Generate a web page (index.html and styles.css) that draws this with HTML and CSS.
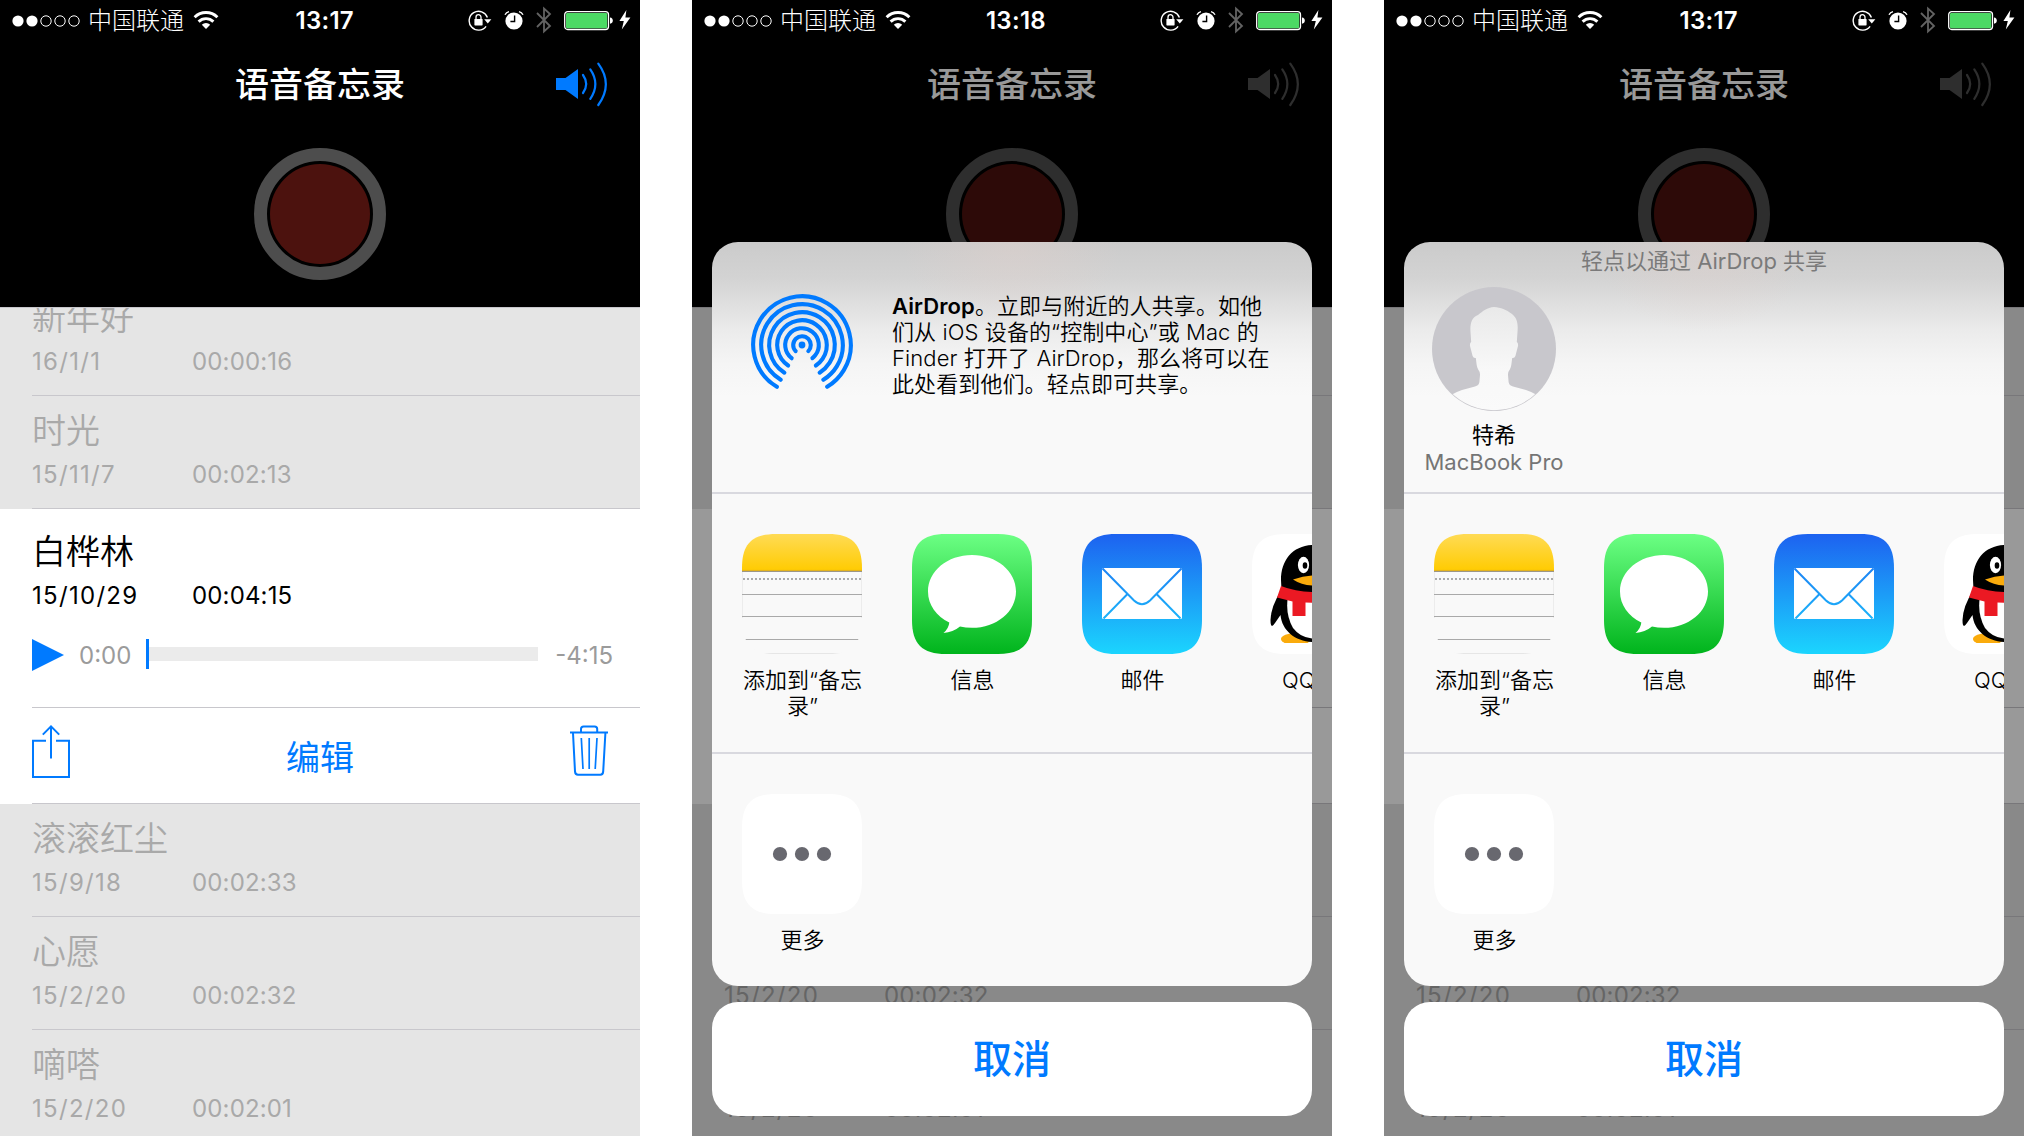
FILE: index.html
```html
<!DOCTYPE html>
<html lang="zh-CN">
<head>
<meta charset="utf-8">
<title>语音备忘录</title>
<link rel="stylesheet" href="styles.css">
</head>
<body>
<svg class="defs" width="0" height="0" aria-hidden="true">
  <defs>
    <linearGradient id="g-notes" x1="0" y1="0" x2="0" y2="1"><stop offset="0" stop-color="#ffdb55"/><stop offset="1" stop-color="#ffcb00"/></linearGradient>
    <linearGradient id="g-msg" x1="0" y1="0" x2="0" y2="1"><stop offset="0" stop-color="#6cff84"/><stop offset="1" stop-color="#00b41c"/></linearGradient>
    <linearGradient id="g-mail" x1="0" y1="0" x2="0" y2="1"><stop offset="0" stop-color="#1d62f0"/><stop offset="1" stop-color="#1bd5fe"/></linearGradient>
    <linearGradient id="g-mail-line" gradientUnits="userSpaceOnUse" x1="0" y1="0" x2="0" y2="120"><stop offset="0" stop-color="#1d62f0"/><stop offset="1" stop-color="#1bd5fe"/></linearGradient>
    <linearGradient id="g-head" x1="0" y1="0" x2="0" y2="1"><stop offset="0" stop-color="#e9e9e9"/><stop offset=".6" stop-color="#f8f8f8"/><stop offset="1" stop-color="#fafafa"/></linearGradient>
    <path id="squircle" d="M34 0H86C110 0 120 10 120 34V86C120 110 110 120 86 120H34C10 120 0 110 0 86V34C0 10 10 0 34 0Z"/>
    <clipPath id="c-app"><use href="#squircle"/></clipPath>
    <clipPath id="c-avatar"><circle cx="62" cy="62" r="61.2"/></clipPath>
  </defs>
  <symbol id="i-signal" viewBox="0 0 70 14">
    <circle cx="7" cy="7" r="5.6" fill="#fff"/><circle cx="21" cy="7" r="5.6" fill="#fff"/>
    <g fill="none" stroke="#fff" stroke-width="1"><circle cx="35" cy="7" r="5.2"/><circle cx="49" cy="7" r="5.2"/><circle cx="63" cy="7" r="5.2"/></g>
  </symbol>
  <symbol id="i-wifi" viewBox="0 0 26 20">
    <g fill="none" stroke="#fff" stroke-width="2.9"><path d="M1.6 7.2A16.3 16.3 0 0 1 24.4 7.2"/><path d="M5.6 11.6A10.6 10.6 0 0 1 20.4 11.6"/></g>
    <path d="M8.8 14.8A6 6 0 0 1 17.2 14.8L13 19Z" fill="#fff"/>
  </symbol>
  <symbol id="i-lock" viewBox="0 0 24 24">
    <path d="M18.1 18.4A9.4 9.4 0 1 1 19.4 9.5" fill="none" stroke="#fff" stroke-width="1.4"/>
    <path d="M16.2 11.2H23.4L19.8 15.6Z" fill="#fff"/>
    <rect x="6.4" y="11" width="8.2" height="6.4" rx=".6" fill="#fff"/>
    <path d="M8 11.4V9.2a2.5 2.5 0 0 1 5 0v2.2" fill="none" stroke="#fff" stroke-width="1.3"/>
  </symbol>
  <symbol id="i-alarm" viewBox="0 0 20 20">
    <circle cx="10" cy="11" r="8.6" fill="#fff"/>
    <path d="M1 4.8A6 6 0 0 1 5 1.6M15 1.6A6 6 0 0 1 19 4.8" fill="none" stroke="#fff" stroke-width="1.4"/>
    <path d="M10.6 5.6V11.5H6.4" fill="none" stroke="#000" stroke-width="1.4"/>
  </symbol>
  <symbol id="i-bt" viewBox="0 0 16 28">
    <path d="M1 7L14 20L8 25.5V2.5L14 8L1 21" fill="none" stroke="#636363" stroke-width="1.8"/>
  </symbol>
  <symbol id="i-battery" viewBox="0 0 50 20">
    <rect x=".7" y=".7" width="43.8" height="17.8" rx="3" fill="none" stroke="#fff" stroke-width="1.3"/>
    <rect x="2" y="2" width="41.2" height="15.2" rx="1.2" fill="#4cd964"/>
    <path d="M46 6.4Q48.8 6.8 48.8 9.6T46 12.8Z" fill="#fff"/>
  </symbol>
  <symbol id="i-bolt" viewBox="0 0 12 20"><path d="M7.4 0L.4 10.9H4.8L2.8 19.4L11.4 7.4H6.4Z" fill="#fff"/></symbol>
  <symbol id="i-speaker" viewBox="0 0 52 46">
    <path d="M0 16H9.5L22 7V37L9.5 28H0Z" fill="currentColor"/>
    <g fill="none" stroke="currentColor" stroke-width="2.2" stroke-linecap="round"><path d="M27 13Q33.4 22 27 31"/><path d="M34.3 7.4Q44.4 22 34.3 36.8"/><path d="M42.3 1.6Q57.4 22 42.3 43"/></g>
  </symbol>
  <symbol id="i-share" viewBox="0 0 38 54">
    <path d="M14 15.8H1V52H37V15.8H24" fill="none" stroke="#007aff" stroke-width="2"/>
    <path d="M19 2V33.4M10.8 9.6L19 1.4L27.2 9.6" fill="none" stroke="#007aff" stroke-width="2"/>
  </symbol>
  <symbol id="i-trash" viewBox="0 0 38 52">
    <g fill="none" stroke="#007aff" stroke-width="2"><path d="M0 7.6H38"/><path d="M11 7.4V4Q11 1.4 13.6 1.4H24.6Q27.2 1.4 27.2 4V7.4"/><path d="M3 8L5 46.4Q5.2 49.8 8 49.8H30.4Q33 49.8 33.2 46.4L35.4 8"/><path d="M11.3 13L13 44M19.2 13V44M27 13L25.2 44" stroke-width="1.7"/></g>
  </symbol>
  <symbol id="i-airdrop" viewBox="0 0 102 102">
    <circle cx="51" cy="51" r="3.4" fill="#007aff"/>
    <g fill="none" stroke="#007aff" stroke-width="4.1" stroke-linecap="round">
      <circle cx="51" cy="51" r="48.8" pathLength="360" stroke-dasharray="298 62" transform="rotate(121 51 51)"/>
      <circle cx="51" cy="51" r="40.8" pathLength="360" stroke-dasharray="297 63" transform="rotate(121.5 51 51)"/>
      <circle cx="51" cy="51" r="32.8" pathLength="360" stroke-dasharray="295 65" transform="rotate(122.5 51 51)"/>
      <circle cx="51" cy="51" r="24.8" pathLength="360" stroke-dasharray="292 68" transform="rotate(124 51 51)"/>
      <circle cx="51" cy="51" r="16.8" pathLength="360" stroke-dasharray="284 76" transform="rotate(128 51 51)"/>
      <circle cx="51" cy="51" r="8.8" pathLength="360" stroke-dasharray="268 92" transform="rotate(136 51 51)"/>
    </g>
  </symbol>
  <symbol id="i-notes" viewBox="0 0 120 120">
    <g clip-path="url(#c-app)">
      <rect width="120" height="120" fill="#f9f9f9"/>
      <path d="M.5 38V84M119.5 38V84" stroke="#ececec"/>
      <path d="M22 119.5H98" stroke="#e6e6e6"/>
      <rect width="120" height="37" fill="url(#g-notes)"/>
      <path d="M0 36.4H120" stroke="#e0b020"/><path d="M0 37.5H120" stroke="#9c9686"/>
      <path d="M1 45H120" stroke="#aaa" stroke-width="1.8" stroke-dasharray="2 2"/>
      <path d="M0 60.5H120M0 82.5H120M3.5 105.5H116.5" stroke="#a9a9a9"/>
    </g>
  </symbol>
  <symbol id="i-msg" viewBox="0 0 120 120">
    <use href="#squircle" fill="url(#g-msg)"/>
    <path d="M60 21C84.5 21 104 37.2 104 57.4S84.5 93.8 60 93.8Q53.500 93.800 48 92.600Q41 98.500 31.500 99Q36.800 94.500 37.300 88.600C24.500 82 16 71 16 57.400C16 37.200 35.500 21 60 21Z" fill="#fff"/>
  </symbol>
  <symbol id="i-mail" viewBox="0 0 120 120">
    <use href="#squircle" fill="url(#g-mail)"/>
    <rect x="20" y="34" width="80" height="51" rx="1.5" fill="#fff"/>
    <path d="M20.500 34.500L52 66.500Q60 74 68 66.500L99.500 34.500M21.500 84.500L45.500 60M98.500 84.500L74.500 60" fill="none" stroke="url(#g-mail-line)" stroke-width="2"/>
  </symbol>
  <symbol id="i-qq" viewBox="0 0 120 120">
    <use href="#squircle" fill="#fff"/>
    <ellipse cx="44" cy="105" rx="15" ry="6" fill="#faab0c"/><ellipse cx="80" cy="105" rx="15" ry="6" fill="#faab0c"/>
    <rect x="28" y="109" width="68" height="4" fill="#fff"/>
    <path d="M62 11C41 11 29 26 29 46L29.500 56Q19 72 18.500 86Q18.500 96 23 89L28.500 81C30 97 44 108 62 108S94 97 95.500 81L101 89Q105.500 96 105.500 86Q105 72 94.500 56L95 46C95 26 83 11 62 11Z"/>
    <path d="M36 62Q33 80 41 94Q49 104.500 62 104.500T83 94Q91 80 88 62Z" fill="#fff"/>
    <ellipse cx="51.500" cy="31" rx="5.600" ry="8.200" fill="#fff"/><ellipse cx="53" cy="31.500" rx="2.300" ry="3.300"/>
    <ellipse cx="72.500" cy="31" rx="5.600" ry="8.200" fill="#fff"/>
    <path d="M41 45.500Q52 41.500 62 41.500T83 45.500Q74 51.500 62 51.500T41 45.500Z" fill="#faab0c"/>
    <path d="M29 52Q44 58 62 58T95 52L99 63.500Q84 69 66 69L53.500 68.500V82H40.500V67.500L25 63.500Z" fill="#eb1923"/>
  </symbol>
  <symbol id="i-more" viewBox="0 0 120 120">
    <use href="#squircle" fill="#fff"/>
    <g fill="#68686f"><circle cx="38" cy="60" r="7.100"/><circle cx="60" cy="60" r="7.100"/><circle cx="82" cy="60" r="7.100"/></g>
  </symbol>
  <symbol id="i-avatar" viewBox="0 0 124 124">
    <circle cx="62" cy="62" r="62" fill="#c8c7cc"/>
    <path clip-path="url(#c-avatar)" fill="url(#g-head)" d="M62 20C55 20.500 51 24 46 28C39 30.500 38 38 38.500 45L39.200 55Q37.600 56 38 59L40.600 69Q41.500 71.500 43.800 71C44.500 76 44.600 80 46.200 82.500Q48.200 85 48 88L47.400 95Q47 98.500 43 99.500L30 103Q24 105 19 108V124H105V108Q100 105 94 103L81 99.500Q77 98.500 76.600 95L76 88Q75.800 85 77.800 82.500C79.400 80 79.500 76 80.200 71Q82.500 71.500 83.400 69L86 59Q86.400 56 84.800 55L85.500 45C86 38 86 32 80 27C74 22.500 69 20.500 62 20Z"/>
  </symbol>
</svg>

<main class="board">
  <section class="phone">
    <div class="status">
      <div class="status-left"><svg class="signal"><use href="#i-signal"/></svg><span class="carrier">中国联通</span><svg class="wifi"><use href="#i-wifi"/></svg><span class="clock">13:17</span></div>
      <svg class="lock"><use href="#i-lock"/></svg><svg class="alarm"><use href="#i-alarm"/></svg><svg class="bt"><use href="#i-bt"/></svg><svg class="battery"><use href="#i-battery"/></svg><svg class="bolt"><use href="#i-bolt"/></svg>
    </div>
    <header class="header">
      <div class="nav"><h1>语音备忘录</h1><svg class="speaker on"><use href="#i-speaker"/></svg></div>
      <div class="record"><i></i></div>
    </header>
    <div class="list">
      <article class="memo first"><h2>新年好</h2><p><span>16/1/1</span><span>00:00:16</span></p></article>
      <article class="memo"><h2>时光</h2><p><span>15/11/7</span><span>00:02:13</span></p></article>
      <article class="active">
        <div class="detail">
          <h2>白桦林</h2><p><span>15/10/29</span><span>00:04:15</span></p>
          <div class="player"><i class="play"></i><span class="elapsed">0:00</span><i class="track"></i><span class="remain">-4:15</span></div>
        </div>
        <div class="tools"><svg class="share"><use href="#i-share"/></svg><span class="edit">编辑</span><svg class="trash"><use href="#i-trash"/></svg></div>
      </article>
      <article class="memo"><h2>滚滚红尘</h2><p><span>15/9/18</span><span>00:02:33</span></p></article>
      <article class="memo"><h2>心愿</h2><p><span>15/2/20</span><span>00:02:32</span></p></article>
      <article class="memo"><h2>嘀嗒</h2><p><span>15/2/20</span><span>00:02:01</span></p></article>
    </div>
  </section>

  <section class="phone">
    <div class="status">
      <div class="status-left"><svg class="signal"><use href="#i-signal"/></svg><span class="carrier">中国联通</span><svg class="wifi"><use href="#i-wifi"/></svg><span class="clock">13:18</span></div>
      <svg class="lock"><use href="#i-lock"/></svg><svg class="alarm"><use href="#i-alarm"/></svg><svg class="bt"><use href="#i-bt"/></svg><svg class="battery"><use href="#i-battery"/></svg><svg class="bolt"><use href="#i-bolt"/></svg>
    </div>
    <header class="header">
      <div class="nav"><h1>语音备忘录</h1><svg class="speaker"><use href="#i-speaker"/></svg></div>
      <div class="record"><i></i></div>
    </header>
    <div class="list">
      <article class="memo first"></article>
      <article class="memo"></article>
      <article class="active"><div class="detail"></div><div class="tools"></div></article>
      <article class="memo"></article>
      <article class="memo"><h2></h2><p><span>15/2/20</span><span>00:02:32</span></p></article>
      <article class="memo"><h2></h2><p><span>15/2/20</span><span>00:02:01</span></p></article>
    </div>
    <div class="dim"></div>
    <div class="actions">
      <div class="sheet">
        <div class="airdrop intro">
          <svg class="airdrop-icon"><use href="#i-airdrop"/></svg>
          <p><b>AirDrop</b>。立即与附近的人共享。如他<br>们从 iOS 设备的“控制中心”或 Mac 的<br>Finder 打开了 AirDrop，那么将可以在<br>此处看到他们。轻点即可共享。</p>
        </div>
        <div class="apps">
          <div class="app"><svg><use href="#i-notes"/></svg><span>添加到“备忘<br>录”</span></div>
          <div class="app"><svg><use href="#i-msg"/></svg><span>信息</span></div>
          <div class="app"><svg><use href="#i-mail"/></svg><span>邮件</span></div>
          <div class="app qq"><svg><use href="#i-qq"/></svg><span>QQ</span></div>
        </div>
        <div class="apps more">
          <div class="app"><svg><use href="#i-more"/></svg><span>更多</span></div>
        </div>
      </div>
      <div class="cancel">取消</div>
    </div>
  </section>

  <section class="phone">
    <div class="status">
      <div class="status-left"><svg class="signal"><use href="#i-signal"/></svg><span class="carrier">中国联通</span><svg class="wifi"><use href="#i-wifi"/></svg><span class="clock">13:17</span></div>
      <svg class="lock"><use href="#i-lock"/></svg><svg class="alarm"><use href="#i-alarm"/></svg><svg class="bt"><use href="#i-bt"/></svg><svg class="battery"><use href="#i-battery"/></svg><svg class="bolt"><use href="#i-bolt"/></svg>
    </div>
    <header class="header">
      <div class="nav"><h1>语音备忘录</h1><svg class="speaker"><use href="#i-speaker"/></svg></div>
      <div class="record"><i></i></div>
    </header>
    <div class="list">
      <article class="memo first"></article>
      <article class="memo"></article>
      <article class="active"><div class="detail"></div><div class="tools"></div></article>
      <article class="memo"></article>
      <article class="memo"><h2></h2><p><span>15/2/20</span><span>00:02:32</span></p></article>
      <article class="memo"><h2></h2><p><span>15/2/20</span><span>00:02:01</span></p></article>
    </div>
    <div class="dim"></div>
    <div class="actions">
      <div class="sheet">
        <div class="airdrop people">
          <p class="hint">轻点以通过 AirDrop 共享</p>
          <div class="person"><svg><use href="#i-avatar"/></svg><span class="name">特希</span><span class="device">MacBook Pro</span></div>
        </div>
        <div class="apps">
          <div class="app"><svg><use href="#i-notes"/></svg><span>添加到“备忘<br>录”</span></div>
          <div class="app"><svg><use href="#i-msg"/></svg><span>信息</span></div>
          <div class="app"><svg><use href="#i-mail"/></svg><span>邮件</span></div>
          <div class="app qq"><svg><use href="#i-qq"/></svg><span>QQ</span></div>
        </div>
        <div class="apps more">
          <div class="app"><svg><use href="#i-more"/></svg><span>更多</span></div>
        </div>
      </div>
      <div class="cancel">取消</div>
    </div>
  </section>
</main>
</body>
</html>
```
FILE: styles.css
```css
* { box-sizing: border-box; margin: 0; padding: 0; }
body {
  background: #fff;
  font-family: Inter, "Noto Sans CJK SC", sans-serif;
  color: #000;
  overflow: hidden;
}
.defs { position: absolute; }
svg { display: block; flex: none; }
.board { display: flex; gap: 52px; width: 2024px; height: 1136px; }
.phone {
  position: relative;
  flex: none;
  display: flex;
  flex-direction: column;
  width: 640px;
  height: 1136px;
  overflow: hidden;
  background: #000;
}

/* status bar */
.status { position: relative; z-index: 2; display: flex; align-items: center; height: 40px; color: #fff; }
.status-left { display: flex; align-items: center; width: 354px; padding-left: 11px; margin-right: 114px; }
.signal { width: 70px; height: 14px; margin-top: 1px; }
.carrier { width: 95px; margin-left: 7px; padding-top: 1px; font-size: 24px; font-weight: 300; line-height: 40px; white-space: nowrap; }
.wifi { width: 26px; height: 20px; margin-left: 10px; }
.clock { margin-left: auto; padding-top: 1px; font-size: 24px; font-weight: 600; line-height: 40px; letter-spacing: .3px; }
.lock { width: 24px; height: 24px; }
.alarm { width: 20px; height: 20px; margin-left: 12px; }
.bt { width: 16px; height: 28px; margin-left: 12px; }
.battery { width: 50px; height: 20px; margin: 1px 0 0 12px; }
.bolt { width: 12px; height: 20px; margin-left: 5px; }

/* recorder header */
.header { flex: none; height: 267px; color: #fff; }
.nav { display: grid; grid-template-columns: 1fr auto 1fr; align-items: center; height: 88px; padding: 1px 32px 0; }
.nav h1 { grid-column: 2; font-size: 34px; font-weight: 500; line-height: 44px; }
.speaker { justify-self: end; width: 52px; height: 46px; margin-top: 1px; color: #4d4d4d; }
.speaker.on { color: #007aff; }
.record { display: flex; width: 132px; height: 132px; margin: 20px auto 0; padding: 3px; border: 13px solid #4d4d4d; border-radius: 50%; }
.record i { flex: 1; border-radius: 50%; background: #4c120e; }

/* memo list */
.list { flex: 1; min-height: 0; overflow: hidden; background: #e5e5e5; border-top: 1px solid #c8c7cc; color: #a9a9a9; }
.memo { height: 113px; margin-left: 32px; padding-top: 15px; border-bottom: 1px solid #c8c7cc; }
.memo.first { margin-top: -25px; }
h2 { height: 40px; font-size: 34px; font-weight: 350; line-height: 40px; }
.list p { display: flex; margin-top: 9px; font-size: 24px; line-height: 30px; letter-spacing: .15px; }
.list p span { width: 160px; }
.list p span:first-child { letter-spacing: 1.3px; }
.active { background: #fff; color: #000; }
.detail { height: 199px; margin-left: 32px; padding: 23px 27px 0 0; border-bottom: 1px solid #c8c7cc; }
.player { display: flex; align-items: center; height: 32px; margin-top: 28px; color: #9b9b9b; font-size: 24px; }
.play { width: 32px; height: 32px; background: #007aff; clip-path: polygon(0 0, 100% 50%, 0 100%); }
.elapsed { width: 52px; margin-left: 15px; }
.track { width: 392px; height: 30px; margin: -2px 0 0 15px; border-left: 3px solid #007aff; background: linear-gradient(#ebebeb, #ebebeb) 0 8px / 100% 14px no-repeat; }
.remain { margin-left: auto; }
.tools { display: grid; grid-template-columns: 1fr auto 1fr; height: 96px; margin-left: 32px; padding-right: 32px; border-bottom: 1px solid #c8c7cc; color: #007aff; }
.share { width: 38px; height: 54px; margin-top: 17px; }
.edit { margin-top: 29px; font-size: 34px; line-height: 42px; }
.trash { width: 38px; height: 52px; margin-top: 17px; justify-self: end; }

/* share sheet */
.dim { position: absolute; inset: 0; background: rgba(0, 0, 0, .4); }
.actions { position: absolute; left: 20px; right: 20px; bottom: 20px; display: flex; flex-direction: column; gap: 16px; }
.sheet {
  height: 744px;
  overflow: hidden;
  border-radius: 26px;
  background:
    radial-gradient(ellipse 110px 90px at 50% 0, rgba(225, 208, 203, .45), rgba(225, 208, 203, 0)),
    linear-gradient(#cbcbcb 0, #d3d3d3 36px, #dedede 60px, #ebebeb 88px, #f5f5f5 122px, #f9f9f9 155px);
}
.airdrop { height: 252px; border-bottom: 2px solid #d9d9df; }
.intro { display: flex; padding: 52px 0 0 39px; }
.airdrop-icon { width: 102px; height: 102px; }
.intro p { margin: -1px 0 0 39px; font-size: 22px; font-weight: 350; line-height: 26px; letter-spacing: .1px; white-space: nowrap; }
.intro b { font-weight: 600; }
.hint { padding-top: 6px; text-align: center; color: #7a7a7a; font-size: 22px; line-height: 26px; }
.person { display: flex; flex-direction: column; align-items: center; width: 164px; margin: 13px 0 0 8px; font-size: 22px; line-height: 27px; white-space: nowrap; }
.person svg { width: 124px; height: 124px; margin-bottom: 11px; }
.device { color: #757575; }
.apps { display: flex; gap: 50px; height: 260px; padding: 40px 0 0 30px; border-bottom: 2px solid #d9d9df; }
.apps.more { border: 0; height: 232px; }
.app { flex: none; width: 120px; text-align: center; font-size: 22px; font-weight: 350; line-height: 26px; white-space: nowrap; }
.app svg { width: 120px; height: 120px; margin-bottom: 13px; }
.app span { display: block; padding-left: 1px; }
.app.qq span { padding-left: 30px; text-align: left; }
.cancel { height: 114px; border-radius: 26px; background: #fff; color: #007aff; font-size: 39px; font-weight: 500; line-height: 114px; text-align: center; }
```
